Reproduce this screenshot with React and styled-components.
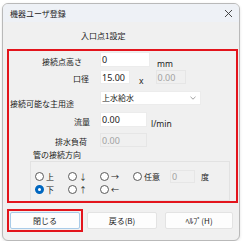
import styled, { createGlobalStyle } from "styled-components";

const GlobalStyle = createGlobalStyle`
  body {
    margin: 0;
    background: #ffffff;
    font-family: "Noto Sans CJK JP", "Noto Sans", sans-serif;
    color: #1b1b1b;
  }
`;

const Page = styled.div`
  padding: 3px 0 0 2px;
`;

const Window = styled.div`
  width: 238px;
  height: 238px;
  box-sizing: border-box;
  border: 1px solid #b9b9b9;
  border-radius: 6px;
  overflow: hidden;
  background: #f0f0f0;
  display: flex;
  flex-direction: column;
  box-shadow: 0 1px 3px rgba(0, 0, 0, 0.12);
`;

const TitleBar = styled.div`
  height: 18px;
  background: #eef1f6;
  display: flex;
  align-items: center;
  justify-content: space-between;
  padding: 0 6px 0 7px;
  font-size: 8px;
`;

const Heading = styled.div`
  height: 27px;
  display: flex;
  align-items: center;
  padding-left: 78px;
  font-size: 8px;
`;

const RedBox = styled.div`
  margin: 0 1px 0 4px;
  height: 154px;
  box-sizing: border-box;
  border: 2px solid #e3141c;
  padding: 1px 0 0 0;
  display: flex;
  flex-direction: column;
`;

const Row = styled.div`
  display: flex;
  align-items: flex-end;
  margin-top: ${({ $top }) => $top}px;
`;

const Label = styled.div`
  width: 91px;
  box-sizing: border-box;
  flex-shrink: 0;
  font-size: 8px;
  line-height: 11px;
  text-align: ${({ $left }) => ($left ? "left" : "right")};
  padding-right: ${({ $pr }) => $pr || 0}px;
  padding-left: ${({ $left }) => ($left ? 1 : 0)}px;
  margin-bottom: ${({ $drop }) => -($drop || 0)}px;
`;

const Input = styled.div`
  width: ${({ $w }) => $w}px;
  height: ${({ $h }) => $h || 14}px;
  box-sizing: border-box;
  background: ${({ $off }) => ($off ? "#f0f0f0" : "#ffffff")};
  border: 1px solid ${({ $off }) => ($off ? "#e6e6e6" : "#ececec")};
  color: ${({ $off }) => ($off ? "#a2a2a2" : "#1b1b1b")};
  font-family: "Noto Sans", sans-serif;
  font-size: 9px;
  line-height: 1;
  display: flex;
  align-items: center;
  padding-left: 1px;
  flex-shrink: 0;
  margin-left: ${({ $ml }) => $ml || 0}px;
`;

const Select = styled(Input)`
  justify-content: space-between;
  padding-right: 4px;
  font-family: "Noto Sans CJK JP", sans-serif;
  font-size: 8px;
`;

const Unit = styled.div`
  font-family: "Noto Sans", sans-serif;
  font-size: 8.5px;
  line-height: 11px;
  margin-left: ${({ $gap }) => $gap}px;
  margin-bottom: -2px;
`;

const Caption = styled.div`
  font-size: 8px;
  line-height: 10px;
  padding-left: 24px;
  margin-top: 3px;
`;

const GroupBox = styled.div`
  margin: 1px 6px 0 21px;
  height: 40px;
  box-sizing: border-box;
  border: 1px solid #e2e2e2;
  padding: 8px 0 0 4px;
  display: grid;
  grid-template-columns: 33px 32px 33px auto;
  grid-auto-rows: 13px;
`;

const Radio = styled.div`
  display: flex;
  align-items: center;
  gap: 2px;
  font-size: 8px;
  line-height: 10px;
  margin-left: ${({ $ml }) => $ml || 0}px;
`;

const Dot = styled.span`
  width: 9px;
  height: 9px;
  box-sizing: border-box;
  border-radius: 50%;
  border: ${({ $on }) => ($on ? "3px solid #0067c0" : "1px solid #5a5a5a")};
  background: #ffffff;
  flex-shrink: 0;
`;

const AngleWrap = styled.div`
  display: flex;
  align-items: center;
`;

const ButtonBar = styled.div`
  display: flex;
  align-items: center;
  padding: 6px 0 0 4px;
  gap: 4px;
`;

const Focus = styled.div`
  border: 2px solid #e3141c;
  padding: 1px;
`;

const Button = styled.div`
  width: ${({ $w }) => $w}px;
  height: 17px;
  box-sizing: border-box;
  background: #fdfdfd;
  border: 1px solid ${({ $def }) => ($def ? "#a9cbe8" : "#e3e3e3")};
  border-radius: 2px;
  display: flex;
  align-items: center;
  justify-content: center;
  font-size: 8px;
  margin-left: ${({ $ml }) => $ml || 0}px;
`;

function Close() {
  return (
    <svg width="9" height="9" viewBox="0 0 9 9">
      <path d="M1 1 L8 8 M8 1 L1 8" stroke="#333" strokeWidth="0.9" />
    </svg>
  );
}

function Chevron() {
  return (
    <svg width="6" height="4" viewBox="0 0 6 4">
      <path d="M0.5 0.8 L3 3.2 L5.5 0.8" fill="none" stroke="#888" strokeWidth="0.8" />
    </svg>
  );
}

export default function App() {
  return (
    <Page>
      <GlobalStyle />
      <Window>
        <TitleBar>
          <span>機器ユーザ登録</span>
          <Close />
        </TitleBar>
        <Heading>入口点1設定</Heading>
        <RedBox>
          <Row $top={0}>
            <Label $pr={18}>接続点高さ</Label>
            <Input $w={50} $h={15}>0</Input>
            <Unit $gap={7}>mm</Unit>
          </Row>
          <Row $top={3}>
            <Label $pr={11}>口径</Label>
            <Input $w={30}>15.00</Input>
            <Unit $gap={9}>x</Unit>
            <Input $w={30} $off $ml={12}>0.00</Input>
          </Row>
          <Row $top={7}>
            <Label $left $drop={4}>接続可能な主用途</Label>
            <Select $w={101}>
              上水給水
              <Chevron />
            </Select>
          </Row>
          <Row $top={7}>
            <Label $pr={10}>流量</Label>
            <Input $w={47} $h={15}>0.00</Input>
            <Unit $gap={4}>l/min</Unit>
          </Row>
          <Row $top={6}>
            <Label $pr={13}>排水負荷</Label>
            <Input $w={47} $off>0.00</Input>
          </Row>
          <Caption>管の接続方向</Caption>
          <GroupBox>
            <Radio><Dot />上</Radio>
            <Radio><Dot />↓</Radio>
            <Radio><Dot />→</Radio>
            <AngleWrap>
              <Radio><Dot />任意</Radio>
              <Input $w={25} $h={13} $off $ml={10}>0</Input>
              <Radio $ml={6}>度</Radio>
            </AngleWrap>
            <Radio><Dot $on />下</Radio>
            <Radio><Dot />↑</Radio>
            <Radio><Dot />←</Radio>
          </GroupBox>
        </RedBox>
        <ButtonBar>
          <Focus>
            <Button $w={70} $def>閉じる</Button>
          </Focus>
          <Button $w={70}>戻る(B)</Button>
          <Button $w={68} $ml={4}>ﾍﾙﾌﾟ(H)</Button>
        </ButtonBar>
      </Window>
    </Page>
  );
}
